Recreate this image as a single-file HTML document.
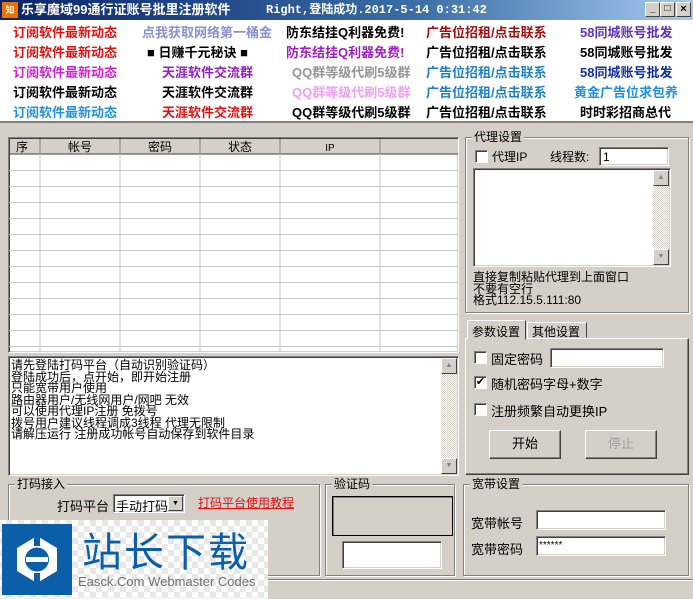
<!DOCTYPE html>
<html><head><meta charset="utf-8"><style>
*{margin:0;padding:0;box-sizing:border-box}
body{width:693px;height:599px;background:#d4d0c8;font-family:"Liberation Sans","Noto Sans CJK SC","WenQuanYi Zen Hei",sans-serif;font-size:12px;position:relative;overflow:hidden;color:#000}
.a{position:absolute}
.title{left:0;top:0;width:693px;height:20px;background:linear-gradient(90deg,#0a246a,#3a6ea5 60%,#a6caf0);color:#fff;font-weight:bold;font-size:13px;line-height:20px}
.ads{left:0;top:20px;width:693px;height:103px;background:#fff;border-bottom:2px solid #808080}
.ad{position:absolute;font-weight:bold;font-size:13px;white-space:nowrap;line-height:16px}
.sunk{border:1px solid;border-color:#808080 #fff #fff #808080;box-shadow:inset 1px 1px 0 #404040,inset -1px -1px 0 #d4d0c8;background:#fff}
.grp{position:absolute;border:1px solid #808080;box-shadow:1px 1px 0 #fff,inset 1px 1px 0 #fff}
.gt{position:absolute;background:#d4d0c8;padding:0 2px;top:-8px;left:6px;line-height:14px}
.cb{position:absolute;width:13px;height:13px;background:#fff;border:1px solid;border-color:#808080 #fff #fff #808080;box-shadow:inset 1px 1px 0 #404040;font-size:11px;line-height:11px;text-align:center}
.btn{position:absolute;background:#d4d0c8;border:1px solid;border-color:#fff #404040 #404040 #fff;box-shadow:inset -1px -1px 0 #808080;text-align:center;font-size:13px}
.sb{position:absolute;right:1px;width:16px;background:repeating-conic-gradient(#d4d0c8 0 25%,#fff 0 50%) 0 0/2px 2px}
.arr{position:absolute;left:0;width:16px;height:16px;background:#d4d0c8;border:1px solid;border-color:#fff #404040 #404040 #fff;font-size:7px;color:#808080;text-align:center;line-height:14px}
</style></head><body>
<div class="a title"><span style="position:absolute;left:2px;top:2px;width:16px;height:16px;background:#f07000;color:#fff;font-size:9px;line-height:16px;text-align:center">知已</span><span style="position:absolute;left:21px">乐享魔域99通行证账号批里注册软件</span><span style="position:absolute;left:266px;font-family:'Liberation Mono','Noto Sans CJK SC',monospace;font-size:12px">Right,登陆成功.2017-5-14 0:31:42</span>
<span style="position:absolute;left:645px;top:2px;width:15px;height:15px;background:#d4d0c8;border:1px solid;border-color:#fff #404040 #404040 #fff;color:#000;font-size:10px;line-height:12px;text-align:center">_</span>
<span style="position:absolute;left:660px;top:2px;width:15px;height:15px;background:#d4d0c8;border:1px solid;border-color:#fff #404040 #404040 #fff;color:#000;font-size:10px;line-height:12px;text-align:center">□</span>
<span style="position:absolute;left:676px;top:2px;width:15px;height:15px;background:#d4d0c8;border:1px solid;border-color:#fff #404040 #404040 #fff;color:#000;font-size:11px;line-height:12px;text-align:center">×</span></div>
<div class="a ads">
<div class="ad" style="left:13px;top:5px;color:#e01010">订阅软件最新动态</div>
<div class="ad" style="left:13px;top:25px;color:#e01010">订阅软件最新动态</div>
<div class="ad" style="left:13px;top:45px;color:#d020d0">订阅软件最新动态</div>
<div class="ad" style="left:13px;top:65px;color:#000">订阅软件最新动态</div>
<div class="ad" style="left:13px;top:85px;color:#2090e0">订阅软件最新动态</div>
<div class="ad" style="left:142px;top:5px;color:#8890d0">点我获取网络第一桶金</div>
<div class="ad" style="left:147px;top:25px;color:#000">■ 日赚千元秘诀 ■</div>
<div class="ad" style="left:162px;top:45px;color:#9020c0">天涯软件交流群</div>
<div class="ad" style="left:162px;top:65px;color:#000">天涯软件交流群</div>
<div class="ad" style="left:162px;top:85px;color:#e01010">天涯软件交流群</div>
<div class="ad" style="left:286px;top:5px;color:#000">防东结挂Q利器免费!</div>
<div class="ad" style="left:286px;top:25px;color:#a020c0">防东结挂Q利器免费!</div>
<div class="ad" style="left:292px;top:45px;color:#909890">QQ群等级代刷5级群</div>
<div class="ad" style="left:292px;top:65px;color:#f0a0f0">QQ群等级代刷5级群</div>
<div class="ad" style="left:292px;top:85px;color:#000">QQ群等级代刷5级群</div>
<div class="ad" style="left:426px;top:5px;color:#a01010">广告位招租/点击联系</div>
<div class="ad" style="left:426px;top:25px;color:#000">广告位招租/点击联系</div>
<div class="ad" style="left:426px;top:45px;color:#2080c0">广告位招租/点击联系</div>
<div class="ad" style="left:426px;top:65px;color:#2080c0">广告位招租/点击联系</div>
<div class="ad" style="left:426px;top:85px;color:#000">广告位招租/点击联系</div>
<div class="ad" style="left:580px;top:5px;color:#6030c0">58同城账号批发</div>
<div class="ad" style="left:580px;top:25px;color:#000">58同城账号批发</div>
<div class="ad" style="left:580px;top:45px;color:#1030a0">58同城账号批发</div>
<div class="ad" style="left:574px;top:65px;color:#2090e0">黄金广告位求包养</div>
<div class="ad" style="left:580px;top:85px;color:#000">时时彩招商总代</div>
</div>

<div class="a sunk" style="left:8px;top:137px;width:451px;height:216px;overflow:hidden">
<svg width="451" height="216" style="position:absolute;left:0;top:0">
<rect x="1" y="1" width="450" height="15" fill="#d4d0c8"/>
<line x1="1" y1="16" x2="451" y2="16" stroke="#404040"/>
<g stroke="#808080"><line x1="31" y1="1" x2="31" y2="16"/><line x1="111" y1="1" x2="111" y2="16"/><line x1="191" y1="1" x2="191" y2="16"/><line x1="271" y1="1" x2="271" y2="16"/><line x1="371" y1="1" x2="371" y2="16"/></g>
<g stroke="#c8c8c8"><line x1="31" y1="16" x2="31" y2="216"/><line x1="111" y1="16" x2="111" y2="216"/><line x1="191" y1="16" x2="191" y2="216"/><line x1="271" y1="16" x2="271" y2="216"/><line x1="371" y1="16" x2="371" y2="216"/>
<line x1="0" y1="32.5" x2="451" y2="32.5"/><line x1="0" y1="48.5" x2="451" y2="48.5"/><line x1="0" y1="64.5" x2="451" y2="64.5"/><line x1="0" y1="80.5" x2="451" y2="80.5"/><line x1="0" y1="96.5" x2="451" y2="96.5"/><line x1="0" y1="112.5" x2="451" y2="112.5"/><line x1="0" y1="128.5" x2="451" y2="128.5"/><line x1="0" y1="144.5" x2="451" y2="144.5"/><line x1="0" y1="160.5" x2="451" y2="160.5"/><line x1="0" y1="176.5" x2="451" y2="176.5"/><line x1="0" y1="192.5" x2="451" y2="192.5"/><line x1="0" y1="208.5" x2="451" y2="208.5"/></g>
<g font-size="12" text-anchor="middle" font-family="Liberation Sans,Noto Sans CJK SC,sans-serif"><text x="13" y="13">序</text><text x="71" y="13">帐号</text><text x="151" y="13">密码</text><text x="231" y="13">状态</text><text x="321" y="13" font-size="10">IP</text></g>
</svg></div>

<div class="a sunk" style="left:8px;top:356px;width:451px;height:120px;line-height:11.5px;font-size:12px;padding:3px 0 0 2px;overflow:hidden">
请先登陆打码平台（自动识别验证码）<br>登陆成功后，点开始，即开始注册<br>只能宽带用户使用<br>路由器用户/无线网用户/网吧 无效<br>可以使用代理IP注册 免拨号<br>拨号用户建议线程调成3线程 代理无限制<br>请解压运行 注册成功帐号自动保存到软件目录
<div class="sb" style="top:1px;bottom:1px"><div class="arr" style="top:0">▲</div><div class="arr" style="bottom:0">▼</div></div></div>

<div class="grp" style="left:465px;top:137px;width:224px;height:176px"><div class="gt">代理设置</div>
<div class="cb" style="left:9px;top:12px"></div><div class="a" style="left:26px;top:10px">代理IP</div>
<div class="a" style="left:84px;top:10px">线程数:</div>
<div class="a sunk" style="left:133px;top:9px;width:70px;height:19px;padding:2px 3px">1</div>
<div class="a sunk" style="left:7px;top:30px;width:198px;height:99px"><div class="sb" style="top:1px;bottom:1px"><div class="arr" style="top:0">▲</div><div class="arr" style="bottom:0">▼</div></div></div>
<div class="a" style="left:7px;top:134px;line-height:11.5px">直接复制粘贴代理到上面窗口<br>不要有空行<br>格式112.15.5.111:80</div>
</div>

<div class="a" style="left:467px;top:320px;width:59px;height:20px;border:1px solid;border-color:#fff #404040 transparent #fff;background:#d4d0c8;padding:2px 0 0 4px;font-size:12px;white-space:nowrap;z-index:2">参数设置</div>
<div class="a" style="left:527px;top:322px;width:60px;height:16px;border:1px solid;border-color:#fff #404040 transparent #fff;padding:0 0 0 4px;font-size:12px;white-space:nowrap">其他设置</div>
<div class="a" style="left:465px;top:338px;width:224px;height:137px;border:1px solid;border-color:#fff #404040 #404040 #fff;box-shadow:inset -1px -1px 0 #808080">
<div class="cb" style="left:8px;top:12px"></div><div class="a" style="left:25px;top:10px;font-size:13px">固定密码</div>
<div class="a sunk" style="left:84px;top:9px;width:114px;height:20px"></div>
<div class="cb" style="left:8px;top:37px">✔</div><div class="a" style="left:25px;top:35px;font-size:13px">随机密码字母+数字</div>
<div class="cb" style="left:8px;top:64px"></div><div class="a" style="left:25px;top:62px;font-size:13px">注册频繁自动更换IP</div>
<div class="btn" style="left:23px;top:91px;width:72px;height:29px;line-height:26px">开始</div>
<div class="btn" style="left:119px;top:91px;width:72px;height:29px;line-height:26px;color:#a0a0a0">停止</div>
</div>

<div class="grp" style="left:8px;top:484px;width:312px;height:92px"><div class="gt">打码接入</div>
<div class="a" style="left:48px;top:11px;font-size:13px">打码平台</div>
<div class="a sunk" style="left:104px;top:9px;width:72px;height:19px;padding:1px 2px;font-size:13px">手动打码<div class="arr" style="left:auto;right:1px;top:1px;width:15px;height:15px;color:#000">▼</div></div>
<div class="a" style="left:189px;top:9px;color:#e01010;text-decoration:underline">打码平台使用教程</div>
</div>
<div class="grp" style="left:325px;top:484px;width:130px;height:92px"><div class="gt">验证码</div>
<div class="a" style="left:6px;top:11px;width:121px;height:40px;border:1px solid #000;box-shadow:inset 1px 1px 0 #808080"></div>
<div class="a sunk" style="left:16px;top:56px;width:100px;height:28px"></div></div>
<div class="grp" style="left:463px;top:484px;width:226px;height:92px"><div class="gt">宽带设置</div>
<div class="a" style="left:7px;top:28px;font-size:13px">宽带帐号</div>
<div class="a sunk" style="left:72px;top:25px;width:130px;height:20px"></div>
<div class="a" style="left:7px;top:54px;font-size:13px">宽带密码</div>
<div class="a sunk" style="left:72px;top:51px;width:130px;height:20px;font-size:10px;padding:3px 2px">******</div></div>
<div class="a" style="left:0;top:579px;width:693px;height:1px;background:#808080"></div>
<div class="a" style="left:0;top:580px;width:693px;height:1px;background:#fff"></div>

<div class="a" style="left:0;top:520px;width:268px;height:79px;background:repeating-conic-gradient(#e8e8e8 0 25%,#fff 0 50%) 0 0/12px 12px">
<div class="a" style="left:2px;top:4px;width:70px;height:71px;background:#0b5fa8">
<svg width="70" height="71"><polygon points="35,12 55,24 55,47 35,59 15,47 15,24" fill="#fff"/><circle cx="35" cy="35.5" r="12" fill="#0b5fa8"/><rect x="24" y="33" width="22" height="5" fill="#fff"/><rect x="32" y="12" width="6" height="10" fill="#0b5fa8"/><rect x="32" y="49" width="6" height="10" fill="#0b5fa8"/></svg></div>
<div class="a" style="left:82px;top:6px;font-size:40px;color:#0b5fa8;letter-spacing:2px;line-height:46px;font-family:'Noto Sans CJK SC',sans-serif">站长下载</div>
<div class="a" style="left:78px;top:54px;font-size:13px;color:#707070;white-space:nowrap">Easck.Com Webmaster Codes</div>
</div>
</body></html>
